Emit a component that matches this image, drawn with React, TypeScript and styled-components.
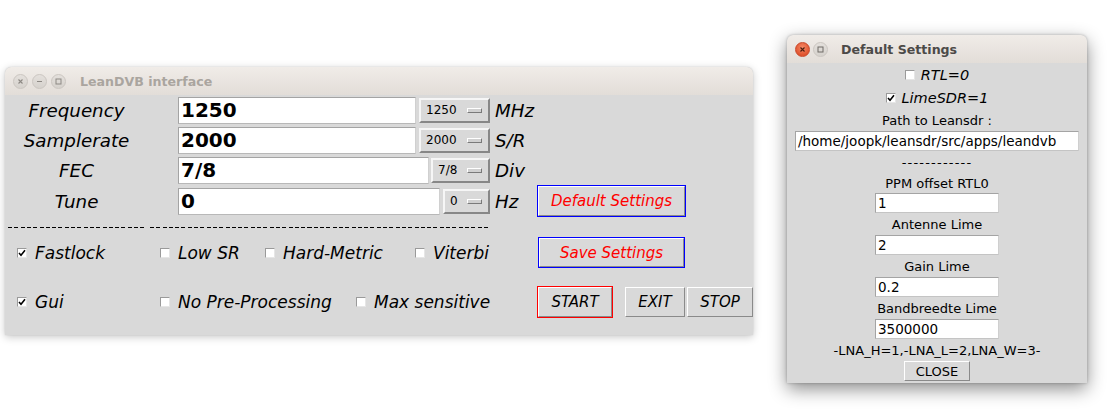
import React from "react";
import styled, { createGlobalStyle } from "styled-components";

const Global = createGlobalStyle`
  html, body { margin: 0; padding: 0; background: #ffffff; }
  body { width: 1116px; height: 410px; overflow: hidden; font-family: "DejaVu Sans", "Liberation Sans", sans-serif; }
`;

const Desktop = styled.div`
  position: relative;
  width: 1116px;
  height: 410px;
  background: #ffffff;
  overflow: hidden;
`;

const Win = styled.div<{ $x: number; $y: number; $w: number; $h: number; $active?: boolean }>`
  position: absolute;
  left: ${(p) => p.$x}px;
  top: ${(p) => p.$y}px;
  width: ${(p) => p.$w}px;
  height: ${(p) => p.$h}px;
  display: flex;
  flex-direction: column;
  background: #d9d9d9;
  border-radius: 6px 6px 0 0;
  box-shadow: ${(p) =>
    p.$active
      ? "0 6px 18px rgba(0,0,0,0.45), 0 0 3px rgba(0,0,0,0.25)"
      : "0 2px 8px rgba(0,0,0,0.22), 0 0 2px rgba(0,0,0,0.12)"};
  overflow: hidden;
`;

const TitleBar = styled.div<{ $gap: number }>`
  height: 28px;
  flex: 0 0 28px;
  display: flex;
  align-items: center;
  padding-left: 8px;
  gap: ${(p) => p.$gap}px;
  background: linear-gradient(#f0ece8, #e2ddd8);
  border-radius: 6px 6px 0 0;
  box-sizing: border-box;
`;

const Title = styled.span<{ $active?: boolean }>`
  margin-left: 10px;
  font-family: "DejaVu Sans", sans-serif;
  font-weight: bold;
  font-size: 12.6px;
  color: ${(p) => (p.$active ? "#4c4a48" : "#aaa59f")};
  white-space: nowrap;
`;

const WinBtn = styled.div<{ $close?: boolean }>`
  width: 15px;
  height: 15px;
  border-radius: 50%;
  box-sizing: border-box;
  display: flex;
  align-items: center;
  justify-content: center;
  background: ${(p) =>
    p.$close
      ? "radial-gradient(circle at 50% 35%, #f68a67, #e0542f 70%)"
      : "linear-gradient(#e4e0dc, #d6d2cd)"};
  border: 1px solid ${(p) => (p.$close ? "#c9482a" : "#cbc6c1")};
`;

const LeftBody = styled.div`
  flex: 1;
  display: flex;
  flex-direction: column;
  padding-left: 3px;
`;

const FormRow = styled.div<{ $h: number }>`
  height: ${(p) => p.$h}px;
  display: flex;
  align-items: center;
`;

const FieldLabel = styled.div`
  width: 137px;
  text-align: center;
  font-style: italic;
  font-size: 18.3px;
  color: #000;
`;

const FieldGroup = styled.div`
  width: 312px;
  margin-left: 33px;
  display: flex;
  align-items: center;
  justify-content: space-between;
`;

const BigEntry = styled.div<{ $w: number }>`
  width: ${(p) => p.$w}px;
  height: 27px;
  box-sizing: border-box;
  background: #ffffff;
  border: 1px solid #a4a4a4;
  border-right-color: #d0d0d0;
  border-bottom-color: #b8b8b8;
  display: flex;
  align-items: center;
  padding-left: 2px;
  font-weight: bold;
  font-size: 20px;
  color: #000;
`;

const OptionMenu = styled.div<{ $w: number }>`
  width: ${(p) => p.$w}px;
  height: 25px;
  box-sizing: border-box;
  border: 2px solid;
  border-color: #f6f6f6 #878787 #878787 #f6f6f6;
  background: #d9d9d9;
  display: flex;
  align-items: center;
  justify-content: space-between;
  padding: 0 6px 0 5px;
  font-size: 12px;
  color: #000;
`;

const Indicator = styled.div`
  width: 15px;
  height: 5px;
  box-sizing: border-box;
  border: 1px solid;
  border-color: #ffffff #7a7a7a #7a7a7a #ffffff;
  background: #d0d0d0;
`;

const Unit = styled.div`
  margin-left: 5px;
  width: 42px;
  font-style: italic;
  font-size: 18.3px;
  color: #000;
`;

const TkButton = styled.div<{ $w: number; $h: number; $outline?: string; $red?: boolean; $ml?: number }>`
  width: ${(p) => p.$w}px;
  height: ${(p) => p.$h}px;
  margin-left: ${(p) => p.$ml ?? 0}px;
  box-sizing: border-box;
  border: 1px solid ${(p) => p.$outline ?? "transparent"};
  display: flex;
  flex: 0 0 auto;
  ${(p) => (p.$outline ? "" : "border: none;")}
`;

const TkFace = styled.div<{ $red?: boolean }>`
  flex: 1;
  box-sizing: border-box;
  border: 1px solid;
  border-color: #ffffff #8a8a8a #8a8a8a #ffffff;
  background: #d9d9d9;
  display: flex;
  align-items: center;
  justify-content: center;
  font-style: italic;
  font-size: 15px;
  color: ${(p) => (p.$red ? "#ff0000" : "#000")};
  white-space: nowrap;
`;

const DashRow = styled.div`
  height: 20px;
  display: flex;
  align-items: center;
  gap: 5px;
`;

const Dashes = styled.div<{ $w: number }>`
  width: ${(p) => p.$w}px;
  height: 1px;
  margin-top: 1px;
  background: repeating-linear-gradient(90deg, #000 0 4px, transparent 4px 6.3px);
`;

const CheckRow = styled.div<{ $h: number; $mt?: number }>`
  height: ${(p) => p.$h}px;
  margin-top: ${(p) => p.$mt ?? 0}px;
  display: flex;
  align-items: center;
  padding-left: 9px;
`;

const CheckItem = styled.div<{ $w?: number; $gap: number }>`
  ${(p) => (p.$w ? `width: ${p.$w}px;` : "")}
  display: flex;
  align-items: center;
  gap: ${(p) => p.$gap}px;
  flex: 0 0 auto;
`;

const Box = styled.div`
  width: 10px;
  height: 10px;
  box-sizing: border-box;
  background: #ffffff;
  border: 1px solid;
  border-color: #9a9a9a #e6e6e6 #e6e6e6 #9a9a9a;
  display: flex;
  align-items: center;
  justify-content: center;
`;

const CheckText = styled.span<{ $size: number }>`
  font-style: italic;
  font-size: ${(p) => p.$size}px;
  color: #000;
  white-space: nowrap;
`;

const RightBody = styled.div`
  flex: 1;
  display: flex;
  flex-direction: column;
  align-items: center;
`;

const Line = styled.div<{ $h: number; $spacing?: number }>`
  height: ${(p) => p.$h}px;
  display: flex;
  align-items: center;
  justify-content: center;
  font-size: 13px;
  color: #000;
  letter-spacing: ${(p) => p.$spacing ?? 0}px;
  white-space: nowrap;
`;

const SmallEntry = styled.div<{ $w: number }>`
  width: ${(p) => p.$w}px;
  height: 20px;
  box-sizing: border-box;
  background: #fff;
  border: 1px solid #a4a4a4;
  border-right-color: #cfcfcf;
  border-bottom-color: #c4c4c4;
  display: flex;
  align-items: center;
  padding-left: 2px;
  font-size: 13.5px;
  color: #000;
  white-space: nowrap;
  overflow: hidden;
`;

const CloseBtn = styled.div`
  width: 66px;
  height: 20px;
  box-sizing: border-box;
  border: 1px solid;
  border-color: #ffffff #8a8a8a #8a8a8a #ffffff;
  display: flex;
  align-items: center;
  justify-content: center;
  font-size: 13px;
  color: #000;
`;

const Tick = () => (
  <svg width="8" height="8" viewBox="0 0 8 8">
    <polyline points="1,4 3,6.2 7,1.2" fill="none" stroke="#000" strokeWidth="1.6" />
  </svg>
);

const Check = ({
  label,
  checked,
  w,
  size = 17,
  gap = 8,
}: {
  label: string;
  checked?: boolean;
  w?: number;
  size?: number;
  gap?: number;
}) => (
  <CheckItem $w={w} $gap={gap}>
    <Box>{checked && <Tick />}</Box>
    <CheckText $size={size}>{label}</CheckText>
  </CheckItem>
);

const XGlyph = ({ color }: { color: string }) => (
  <svg width="7" height="7" viewBox="0 0 7 7">
    <path d="M1.5 1.5 L5.5 5.5 M5.5 1.5 L1.5 5.5" stroke={color} strokeWidth="1.1" />
  </svg>
);
const MinGlyph = () => (
  <svg width="7" height="7" viewBox="0 0 7 7">
    <path d="M1 3.5 H6" stroke="#8d8984" strokeWidth="1.1" />
  </svg>
);
const MaxGlyph = ({ color }: { color: string }) => (
  <svg width="7" height="7" viewBox="0 0 7 7">
    <rect x="1" y="1" width="5" height="5" fill="none" stroke={color} strokeWidth="1" />
  </svg>
);

const Field = ({
  label,
  value,
  entryW,
  opt,
  optW,
  unit,
  h,
  children,
}: {
  label: string;
  value: string;
  entryW: number;
  opt: string;
  optW: number;
  unit: string;
  h: number;
  children?: React.ReactNode;
}) => (
  <FormRow $h={h}>
    <FieldLabel>{label}</FieldLabel>
    <FieldGroup>
      <BigEntry $w={entryW}>{value}</BigEntry>
      <OptionMenu $w={optW}>
        <span>{opt}</span>
        <Indicator />
      </OptionMenu>
    </FieldGroup>
    <Unit>{unit}</Unit>
    {children}
  </FormRow>
);

export default function App() {
  return (
    <>
      <Global />
      <Desktop>
        <Win $x={5} $y={67} $w={748} $h={268}>
          <TitleBar $gap={4}>
            <WinBtn>
              <XGlyph color="#8d8984" />
            </WinBtn>
            <WinBtn>
              <MinGlyph />
            </WinBtn>
            <WinBtn>
              <MaxGlyph color="#8d8984" />
            </WinBtn>
            <Title>LeanDVB interface</Title>
          </TitleBar>
          <LeftBody>
            <Field h={30} label="Frequency" value="1250" entryW={238} opt="1250" optW={71} unit="MHz" />
            <Field h={30} label="Samplerate" value="2000" entryW={238} opt="2000" optW={71} unit="S/R" />
            <Field h={30} label="FEC" value="7/8" entryW={251} opt="7/8" optW={59} unit="Div" />
            <Field h={32} label="Tune" value="0" entryW={262} opt="0" optW={47} unit="Hz">
              <TkButton $w={149} $h={32} $outline="#0000ff">
                <TkFace $red>Default Settings</TkFace>
              </TkButton>
            </Field>
            <DashRow>
              <Dashes $w={137} />
              <Dashes $w={340} />
            </DashRow>
            <CheckRow $h={31}>
              <Check w={143} label="Fastlock" checked />
              <Check w={105} label="Low SR" />
              <Check w={150} label="Hard-Metric" />
              <Check w={123} label="Viterbi" />
              <TkButton $w={147} $h={31} $outline="#0000ff">
                <TkFace $red>Save Settings</TkFace>
              </TkButton>
            </CheckRow>
            <CheckRow $h={32} $mt={18}>
              <Check w={143} label="Gui" checked />
              <Check w={196} label="No Pre-Processing" />
              <Check w={181} label="Max sensitive" />
              <TkButton $w={76} $h={32} $outline="#ff0000">
                <TkFace>START</TkFace>
              </TkButton>
              <TkButton $w={60} $h={30} $ml={12}>
                <TkFace>EXIT</TkFace>
              </TkButton>
              <TkButton $w={66} $h={30} $ml={2}>
                <TkFace>STOP</TkFace>
              </TkButton>
            </CheckRow>
          </LeftBody>
        </Win>

        <Win $x={787} $y={35} $w={300} $h={348} $active>
          <TitleBar $gap={3}>
            <WinBtn $close>
              <XGlyph color="#4a1e10" />
            </WinBtn>
            <WinBtn>
              <MaxGlyph color="#6f6b66" />
            </WinBtn>
            <Title $active>Default Settings</Title>
          </TitleBar>
          <RightBody>
            <Line $h={23}>
              <Check label="RTL=0" size={14.5} gap={6} />
            </Line>
            <Line $h={23}>
              <Check label="LimeSDR=1" checked size={14.5} gap={6} />
            </Line>
            <Line $h={22}>Path to Leansdr :</Line>
            <SmallEntry $w={284}>/home/joopk/leansdr/src/apps/leandvb</SmallEntry>
            <Line $h={22} $spacing={1.2}>------------</Line>
            <Line $h={20}>PPM offset RTL0</Line>
            <SmallEntry $w={124}>1</SmallEntry>
            <Line $h={22}>Antenne Lime</Line>
            <SmallEntry $w={124}>2</SmallEntry>
            <Line $h={22}>Gain Lime</Line>
            <SmallEntry $w={124}>0.2</SmallEntry>
            <Line $h={22}>Bandbreedte Lime</Line>
            <SmallEntry $w={124}>3500000</SmallEntry>
            <Line $h={22}>-LNA_H=1,-LNA_L=2,LNA_W=3-</Line>
            <CloseBtn>CLOSE</CloseBtn>
          </RightBody>
        </Win>
      </Desktop>
    </>
  );
}
